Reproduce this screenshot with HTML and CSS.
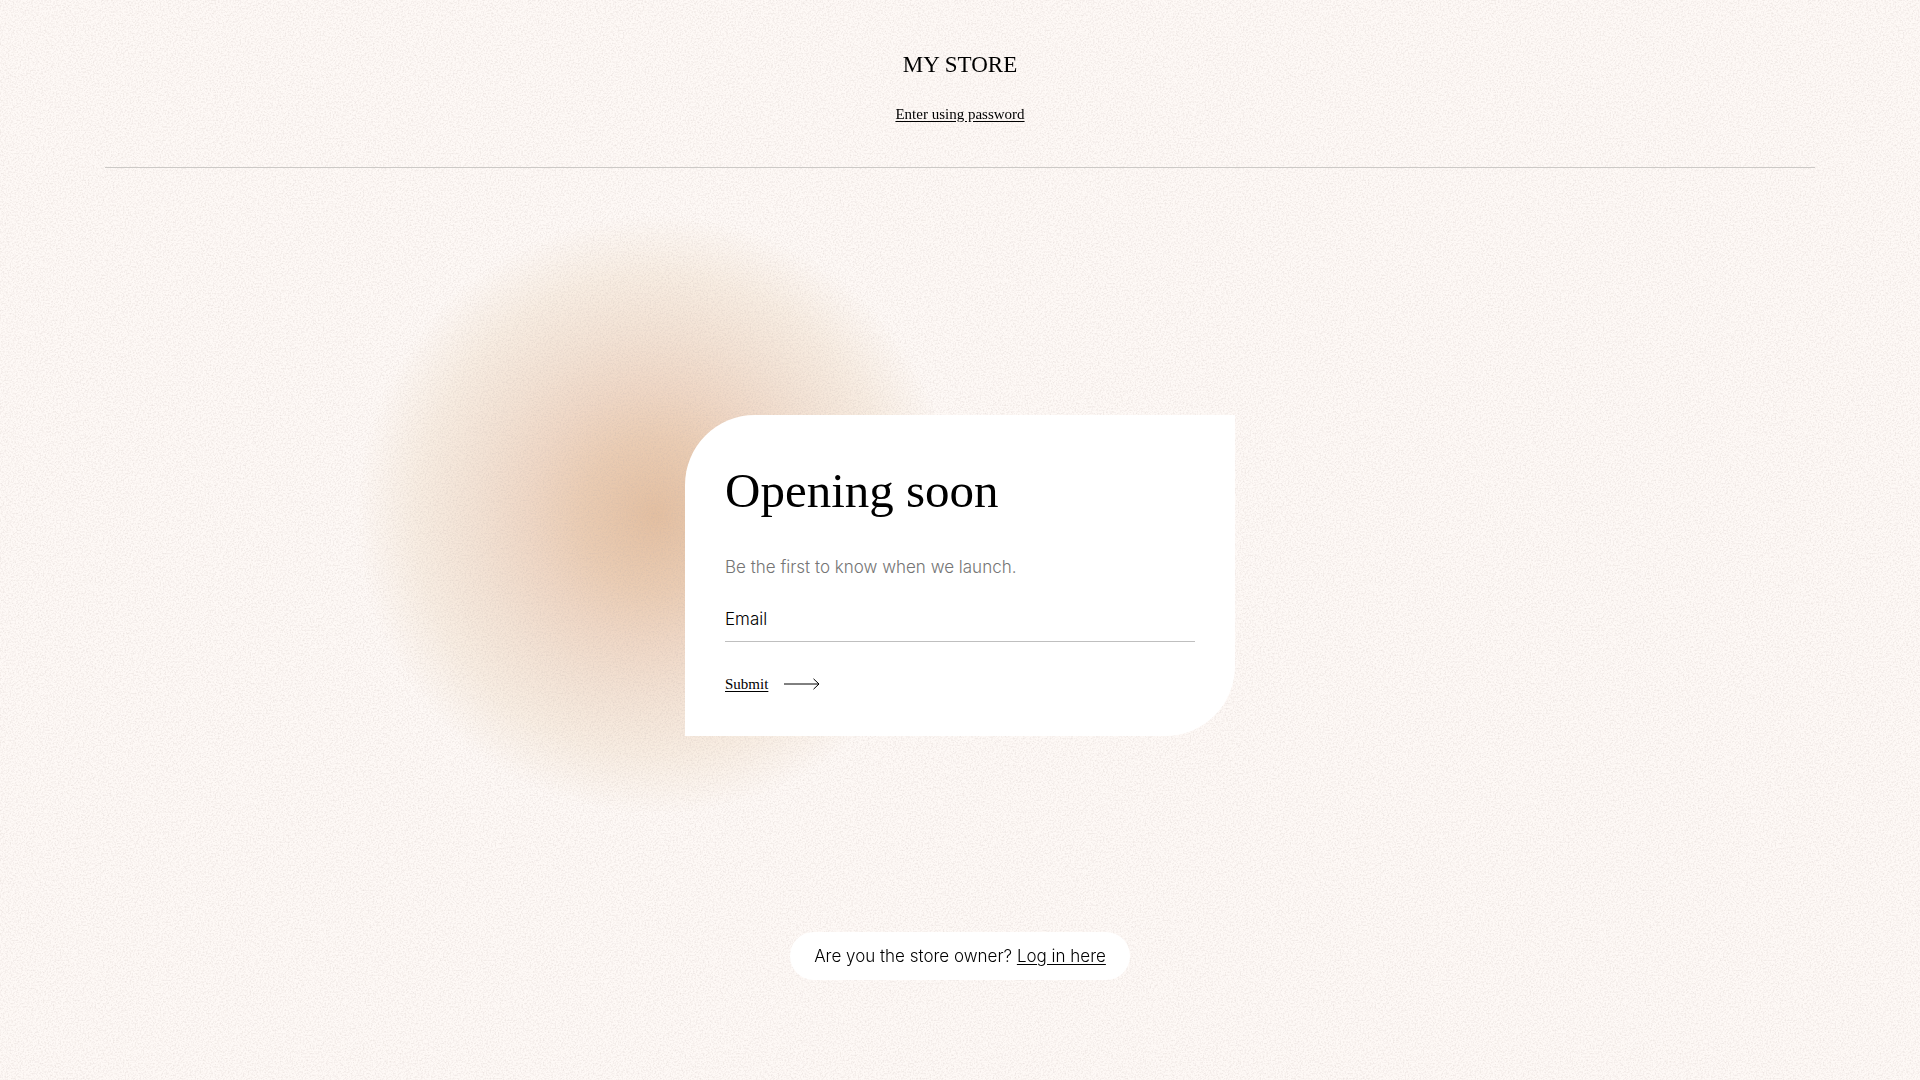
FILE: index.html
```html
<!DOCTYPE html>
<html lang="en">

<head>
    <meta charset="UTF-8">
    <meta name="viewport" content="width=device-width, initial-scale=1">
    <title>My Store</title>
    <link rel="stylesheet" href="styles.css">
</head>

<body>
    <svg class="grain" aria-hidden="true">
        <filter id="noise" x="0" y="0" width="100%" height="100%">
            <feTurbulence type="fractalNoise" baseFrequency="0.6" numOctaves="3" stitchTiles="stitch" />
            <feColorMatrix values="0 0 0 0 0.5  0 0 0 0 0.42  0 0 0 0 0.4  0.55 0 0 0 -0.23" />
        </filter>
        <rect width="100%" height="100%" filter="url(#noise)" />
    </svg>
    <header class="header">
        <h1 class="store-name">MY STORE</h1>
        <a class="password-link" href="#password">Enter using password</a>
    </header>
    <main class="main">
        <section class="card-wrap">
            <div class="card">
                <h2 class="card-title">Opening soon</h2>
                <p class="card-text">Be the first to know when we launch.</p>
                <form class="signup">
                    <input class="email" type="email" name="email" placeholder="Email" aria-label="Email" required>
                    <button class="submit" type="submit">
                        <span class="submit-text">Submit</span>
                        <svg class="arrow" width="36" height="12" viewBox="0 0 36 12" fill="none" stroke="currentColor" aria-hidden="true">
                            <path d="M0 6H35M29.500 .8L35 6L29.500 11.200" />
                        </svg>
                    </button>
                </form>
            </div>
        </section>
    </main>
    <footer class="footer">
        <p class="owner">Are you the store owner? <a href="#login">Log in here</a></p>
    </footer>
</body>

</html>
```
FILE: styles.css
```css
* {
    box-sizing: border-box;
}

body {
    display: flex;
    flex-direction: column;
    min-height: 100vh;
    margin: 0;
    background-color: #fef9f6;
    color: #000;
    font-family: Inter, sans-serif;
    font-size: 17px;
    font-weight: 300;
    line-height: 24px;
}

a {
    color: inherit;
    text-underline-offset: 2px;
}

/* paper texture over the background and the glow, under the content */
.grain {
    position: fixed;
    inset: 0;
    z-index: -1;
    width: 100%;
    height: 100%;
}

.header {
    display: flex;
    flex-direction: column;
    align-items: center;
    gap: 22px;
    width: calc(100% - 210px);
    margin: 0 auto;
    padding: 50px 0 41px;
    border-bottom: 1px solid #ccc9c6;
    font-family: "Liberation Serif", serif;
}

.store-name {
    margin: 0;
    font-size: 23px;
    font-weight: 400;
    line-height: 30px;
}

.password-link {
    font-size: 15px;
    font-weight: 400;
    line-height: 24px;
}

.main {
    display: flex;
    flex: 1;
    align-items: center;
    justify-content: center;
    padding: 50px 20px 0;
}

.card-wrap {
    position: relative;
    width: 100%;
    max-width: 550px;
}

/* soft round glow behind the card */
.card-wrap::before {
    content: "";
    position: absolute;
    top: -200px;
    left: -329px;
    z-index: -2;
    width: 600px;
    height: 600px;
    border-radius: 50%;
    background: radial-gradient(closest-side, #e3bfa1 0%, #eaccb3 25%, #efd7c5 42%, #f3e2d4 60%, #f8ede2 80%, rgba(254, 249, 246, 0) 100%);
}

.card {
    padding: 40px;
    border-radius: 70px 0;
    background-color: #fff;
}

.card-title {
    margin: 0 0 28px;
    font-family: "Liberation Serif", serif;
    font-size: 49px;
    font-weight: 400;
    line-height: 72px;
}

.card-text {
    margin: 0;
    color: #757575;
}

.signup {
    display: flex;
    flex-direction: column;
    align-items: flex-start;
    gap: 30px;
}

.email {
    width: 100%;
    height: 63px;
    padding: 19px 0 0;
    border: 0;
    border-bottom: 1px solid #bfbfbf;
    border-radius: 0;
    background: none;
    color: #000;
    font: inherit;
    outline: 0;
}

.email::placeholder {
    color: #000;
    opacity: 1;
}

.submit {
    display: flex;
    align-items: center;
    gap: 16px;
    padding: 0;
    border: 0;
    background: none;
    color: #000;
    font-family: "Liberation Serif", serif;
    font-size: 15px;
    line-height: 24px;
    cursor: pointer;
}

.submit-text {
    text-decoration: underline;
    text-underline-offset: 2px;
}

.footer {
    display: flex;
    justify-content: center;
    padding: 0 20px 100px;
}

.owner {
    margin: 0;
    padding: 12px 24px;
    border-radius: 24px;
    background-color: #fff;
}
```
